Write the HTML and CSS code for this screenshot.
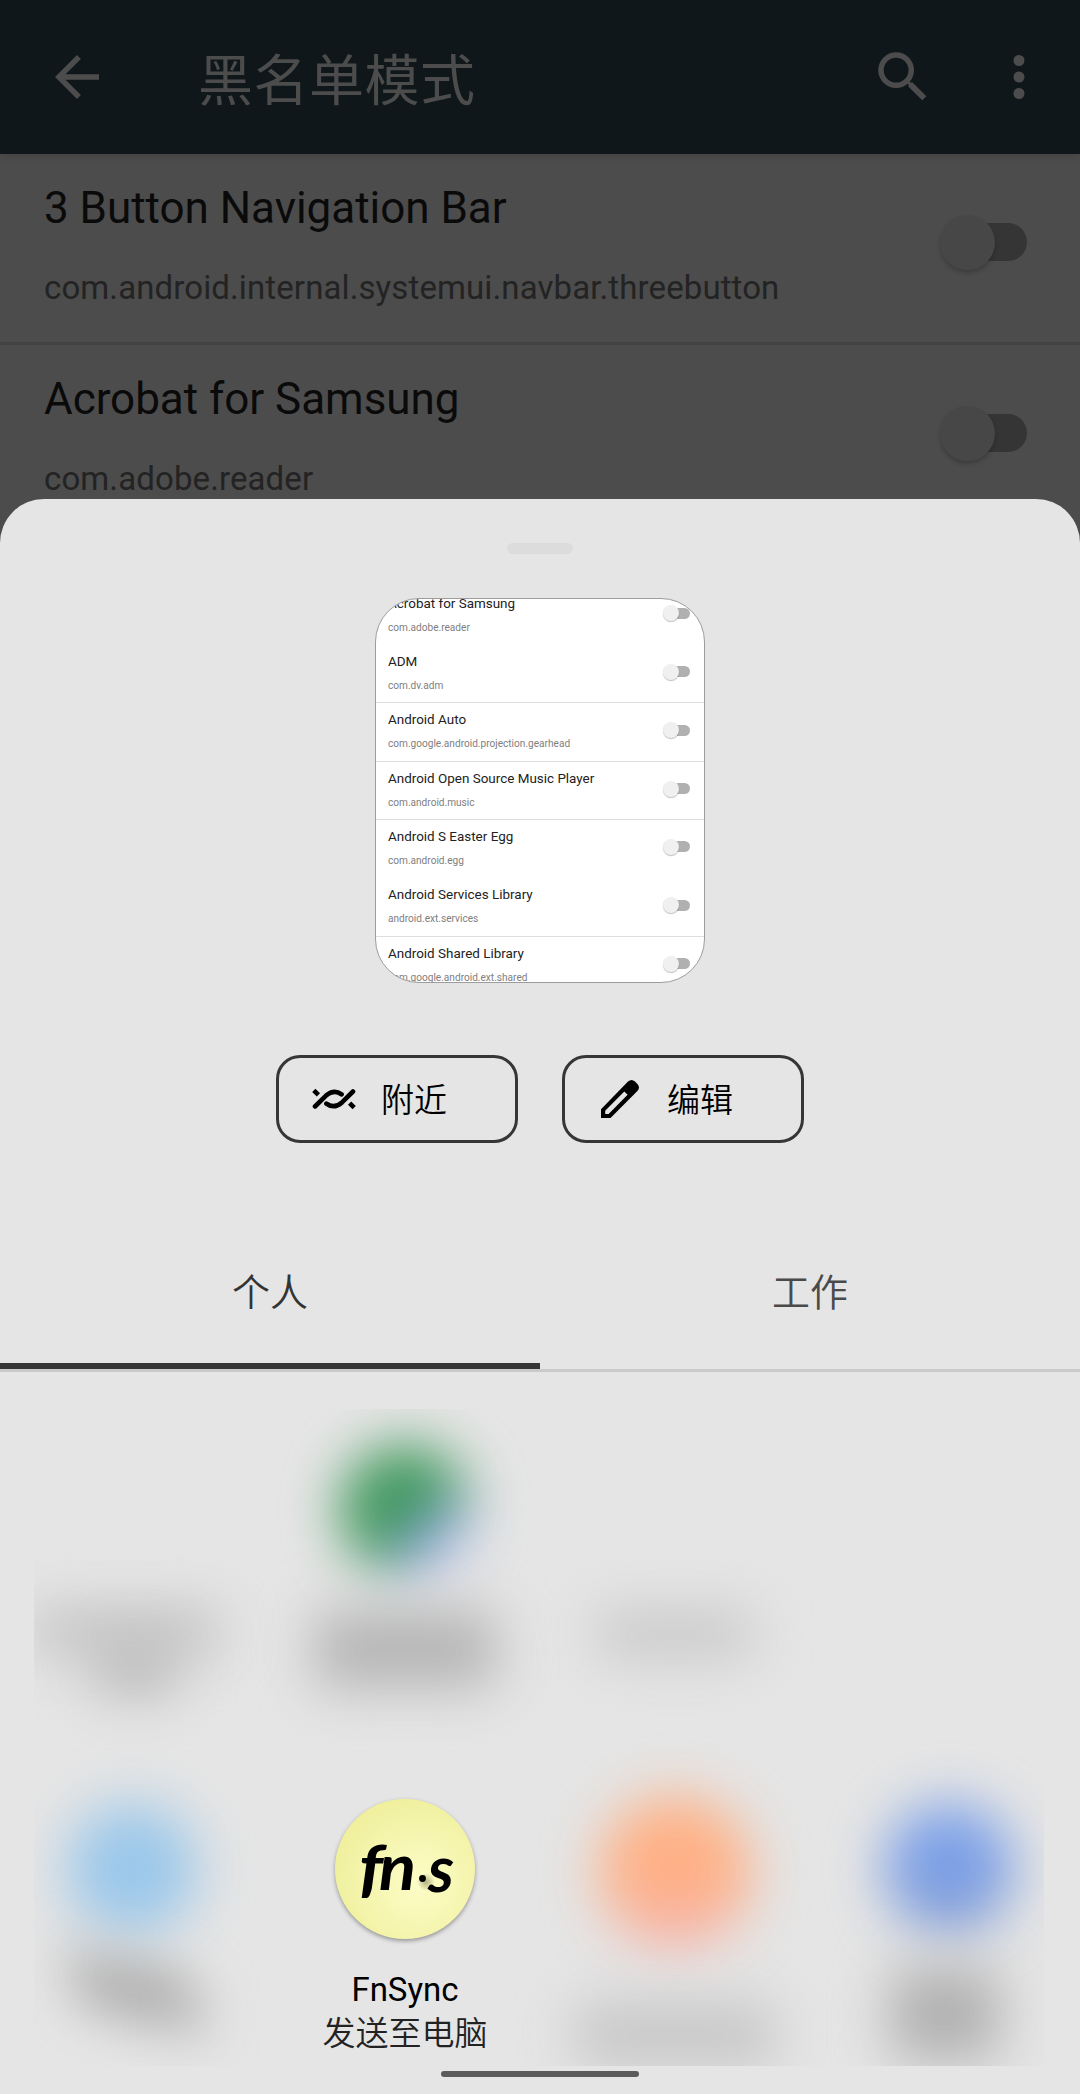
FILE: index.html
```html
<!DOCTYPE html>
<html lang="zh-CN">
<head>
<meta charset="utf-8">
<title>黑名单模式</title>
<link rel="stylesheet" href="styles.css">
</head>
<body>
<div class="screen">
  <div class="app">
    <header class="appbar">
      <svg class="icon" viewBox="0 0 24 24"><path d="M20 11H7.83l5.59-5.59L12 4l-8 8 8 8 1.41-1.41L7.83 13H20z"/></svg>
      <h1 class="appbar-title">黑名单模式</h1>
      <svg class="icon search" viewBox="0 0 24 24"><path d="M15.5 14h-.79l-.28-.27A6.47 6.47 0 0 0 16 9.5 6.5 6.5 0 1 0 9.5 16c1.61 0 3.09-.59 4.23-1.57l.27.28v.79l5 4.99L20.49 19zm-6 0a4.5 4.5 0 1 1 0-9 4.5 4.5 0 0 1 0 9z"/></svg>
      <svg class="icon" viewBox="0 0 24 24"><circle cx="12" cy="6" r="2"/><circle cx="12" cy="12" r="2"/><circle cx="12" cy="18" r="2"/></svg>
    </header>
    <ul class="list">
      <li class="row"><div class="row-text"><div class="row-title">3 Button Navigation Bar</div><div class="row-sub">com.android.internal.systemui.navbar.threebutton</div></div><span class="switch"></span></li>
      <li class="row"><div class="row-text"><div class="row-title">Acrobat for Samsung</div><div class="row-sub">com.adobe.reader</div></div><span class="switch"></span></li>
    </ul>
  </div>

  <main class="sheet">
    <div class="handle"></div>
    <div class="preview">
      <ul class="mini-list">
        <li class="mini no-line"><div><div class="mini-title">Acrobat for Samsung</div><div class="mini-sub">com.adobe.reader</div></div><span class="mini-switch"></span></li>
        <li class="mini"><div><div class="mini-title">ADM</div><div class="mini-sub">com.dv.adm</div></div><span class="mini-switch"></span></li>
        <li class="mini"><div><div class="mini-title">Android Auto</div><div class="mini-sub">com.google.android.projection.gearhead</div></div><span class="mini-switch"></span></li>
        <li class="mini"><div><div class="mini-title">Android Open Source Music Player</div><div class="mini-sub">com.android.music</div></div><span class="mini-switch"></span></li>
        <li class="mini no-line"><div><div class="mini-title">Android S Easter Egg</div><div class="mini-sub">com.android.egg</div></div><span class="mini-switch"></span></li>
        <li class="mini"><div><div class="mini-title">Android Services Library</div><div class="mini-sub">android.ext.services</div></div><span class="mini-switch"></span></li>
        <li class="mini"><div><div class="mini-title">Android Shared Library</div><div class="mini-sub">com.google.android.ext.shared</div></div><span class="mini-switch"></span></li>
      </ul>
    </div>
    <div class="actions">
      <button class="action">
        <svg width="44" height="44" viewBox="52 47 44 44" fill="none" stroke="#000" stroke-width="4.6" stroke-linecap="round"><path d="M55 76.5L66 65.6Q74 58.6 81.6 64.4M93 61.5L82 72.4Q74 79.4 66.4 73.6"/><path stroke-linecap="butt" d="M53.8 60.3L58.4 64.9M89.6 73.1L94.2 77.7"/></svg>
        <span>附近</span>
      </button>
      <button class="action">
        <svg width="44" height="44" viewBox="338 47 44 44"><path fill-rule="evenodd" d="M341 88V79.3L368 51.6Q371.5 48.5 375 51.6L377.4 54Q380.6 57.5 377.4 61L350.5 88zM345.2 84H348.6L367.6 64.8L364.3 61.4L345.2 80.8z"/></svg>
        <span>编辑</span>
      </button>
    </div>
    <nav class="tabs">
      <div class="tab active">个人</div>
      <div class="tab">工作</div>
    </nav>
    <section class="targets">
      <div class="target soft"><i class="face none"></i><i class="words wide"></i><i class="words short"></i></div>
      <div class="target soft"><i class="face green"></i><i class="words block"></i></div>
      <div class="target soft"><i class="face none"></i><i class="words pale"></i></div>
      <div class="target"></div>
      <div class="target soft"><i class="face sky"></i><i class="words slant"></i></div>
      <div class="target">
        <svg class="logo" viewBox="0 0 140 140">
          <defs>
            <radialGradient id="disc" cx=".6" cy=".6" r=".65"><stop offset="0" stop-color="#fdfdc8"/><stop offset="1" stop-color="#efef9c"/></radialGradient>
            <radialGradient id="spot"><stop offset="0" stop-color="#777750" stop-opacity=".55"/><stop offset="1" stop-color="#777750" stop-opacity="0"/></radialGradient>
          </defs>
          <circle cx="70" cy="70" r="70" fill="url(#disc)"/>
          <circle cx="91" cy="83" r="9" fill="url(#spot)"/>
          <g class="logo-text"><text x="24" y="92" textLength="24" lengthAdjust="spacingAndGlyphs">f</text><text x="44" y="91" textLength="37" lengthAdjust="spacingAndGlyphs">n</text><text x="93" y="92.5" textLength="26" lengthAdjust="spacingAndGlyphs">s</text></g>
          <circle cx="87.5" cy="79.5" r="3.4"/>
        </svg>
        <div class="target-name">FnSync</div>
        <div class="target-desc">发送至电脑</div>
      </div>
      <div class="target soft"><i class="face orange"></i><i class="words low"></i></div>
      <div class="target soft"><i class="face blue"></i><i class="words tall"></i></div>
    </section>
    <div class="home-bar"></div>
  </main>
</div>
</body>
</html>
```
FILE: styles.css
```css
* { box-sizing: border-box; }
body { margin: 0; font-family: Roboto, "Noto Sans CJK SC", sans-serif; }
ul { list-style: none; margin: 0; padding: 0; }
.screen { width: 1080px; height: 2094px; overflow: hidden; background: #4c4c4c; display: flex; flex-direction: column; }
.app { height: 499px; flex: none; }
.appbar { height: 154px; padding: 0 28px 0 44px; display: flex; align-items: center; background: #0f171a; box-shadow: 0 2px 8px rgba(0, 0, 0, .12); position: relative; }
.icon { width: 66px; height: 66px; fill: #4c4c4c; flex: none; }
.appbar-title { margin: 0 0 0 88px; padding-top: 7px; font-size: 55px; line-height: 80px; letter-spacing: .5px; font-weight: 400; color: #4c4c4c; flex: 1; }
.search { margin-right: 50px; }
.row { height: 191px; display: flex; justify-content: space-between; padding: 28px 53px 0 44px; border-bottom: 3px solid #434343; }
.row:last-child { border-bottom: 0; }
.row-title { font-size: 44px; line-height: 52px; letter-spacing: -.03px; color: #0a0a0a; white-space: nowrap; }
.row-sub { margin-top: 34px; font-size: 33px; line-height: 39px; letter-spacing: .11px; color: #232323; }
.switch { width: 77px; height: 38px; margin-top: 41px; border-radius: 19px; background: #353535; display: flex; align-items: center; }
.switch::before { content: ""; width: 55px; height: 55px; margin-left: -10px; border-radius: 50%; background: #474747; box-shadow: 0 3px 4px rgba(0, 0, 0, .2); flex: none; }

.sheet { flex: 1; background: #e5e5e5; border-radius: 44px 44px 0 0; display: flex; flex-direction: column; align-items: center; position: relative; }
.handle { width: 66px; height: 11px; margin-top: 44px; border-radius: 6px; background: #dcdcdc; flex: none; }
.preview { width: 330px; height: 385px; margin-top: 44px; border: 1.5px solid #9c9c9c; border-radius: 44px; background: #fff; overflow: hidden; flex: none; }
.mini-list { margin-top: -12.5px; }
.mini { height: 58.4px; padding: 7px 14px 0 12px; display: flex; justify-content: space-between; border-bottom: 1px solid #dedede; }
.mini.no-line { border-color: transparent; }
.mini-title { font-size: 13.45px; line-height: 20px; color: #222; white-space: nowrap; }
.mini-sub { margin-top: 6px; font-size: 10.1px; line-height: 16px; color: #808080; white-space: nowrap; }
.mini-switch { width: 23px; height: 11px; margin-top: 14.4px; border-radius: 6px; background: #b0b0b0; display: flex; align-items: center; }
.mini-switch::before { content: ""; width: 16px; height: 16px; margin-left: -4px; border-radius: 50%; background: #f0f0f0; box-shadow: 0 1px 1px rgba(0, 0, 0, .25); flex: none; }

.actions { display: flex; gap: 44px; margin-top: 72px; flex: none; }
.action { width: 242px; height: 88px; padding: 0 0 0 33px; display: flex; align-items: center; gap: 25px; border: 3px solid #363636; border-radius: 24px; background: none; font: 350 33px/44px "Noto Sans CJK SC", sans-serif; color: #000; }
.action span { margin-top: -2px; }
.tabs { width: 1080px; height: 154px; margin-top: 75px; display: flex; border-bottom: 3px solid #cacaca; flex: none; }
.tab { flex: 1; display: flex; justify-content: center; align-items: center; padding-bottom: 1px; border-bottom: 6px solid transparent; font: 350 38px/50px "Noto Sans CJK SC", sans-serif; color: #4a4a4a; }
.tab.active { color: #333; border-color: #363636; }

.targets { width: 1080px; height: 657px; margin-top: 37px; padding-top: 31px; display: grid; grid-template-columns: repeat(4, 270px); grid-template-rows: 359px 359px; clip-path: inset(0 36px 0 34px); flex: none; }
.target { display: flex; flex-direction: column; align-items: center; }
.soft .face, .soft .words { display: block; flex: none; filter: blur(27px); }
.face { width: 130px; height: 130px; margin-top: 5px; border-radius: 50%; }
.none { visibility: hidden; }
.soft .green { background: radial-gradient(circle at 98% 100%, #c3c8f0 0 16%, #7f9cd8 32%, #3f985a 50%); }
.sky { background: #9ac7ea; margin-right: 6px; }
.orange { width: 152px; height: 152px; margin-top: -3px; background: linear-gradient(#ffb084 55%, #f5b2b0); }
.blue { background: linear-gradient(#7a9fe8 40%, #829cd2); margin-left: 8px; }
.words { border-radius: 10px; background: #b0b0b0; }
.words.wide { width: 190px; height: 40px; margin: 36px 20px 0 0; background: #bfbfbf; }
.words.short { width: 84px; height: 50px; margin-top: -8px; background: #b8b8b8; }
.words.block { width: 180px; height: 76px; margin-top: 36px; background: #b4b4b4; }
.words.pale { width: 156px; height: 44px; margin-top: 37px; background: #c6c6c6; }
.words.slant { width: 125px; height: 54px; margin-top: 30px; background: #a8a8a8; transform: skewY(12deg); }
.words.low { width: 200px; height: 64px; margin-top: 55px; background: #c6c6c6; }
.words.tall { width: 108px; height: 92px; margin-top: 34px; background: #b0b0b0; }
.logo { width: 140px; height: 140px; flex: none; overflow: visible; filter: drop-shadow(0 2px 2px rgba(0, 0, 0, .35)); }
.logo-text { font: italic 700 64px Lato, sans-serif; }
.target-name { margin-top: 29px; font-size: 33px; line-height: 44px; color: #000; }
.target-desc { margin-top: -3px; font: 350 33px/44px "Noto Sans CJK SC", sans-serif; color: #222; }
.home-bar { width: 198px; height: 6px; margin-top: 5px; border-radius: 3px; background: #5b5b5b; flex: none; }
```
